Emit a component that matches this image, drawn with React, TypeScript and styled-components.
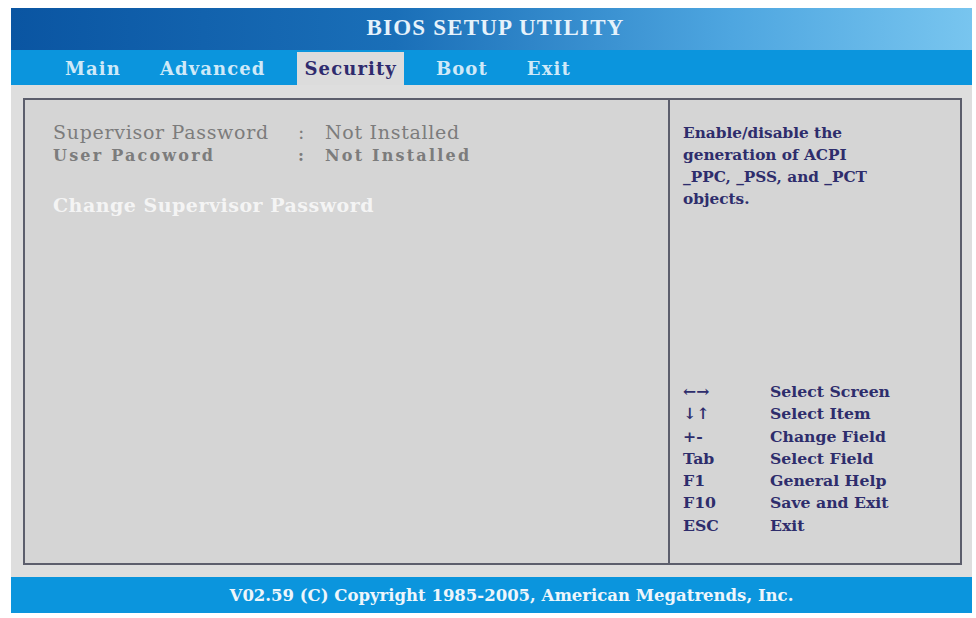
import React from 'react';
import styled, { createGlobalStyle } from 'styled-components';

const GlobalStyle = createGlobalStyle`
  html, body {
    margin: 0;
    padding: 0;
    background: #ffffff;
  }
  body {
    font-family: "DejaVu Serif", "Liberation Serif", serif;
  }
`;

const Page = styled.div`
  width: 976px;
  height: 618px;
  box-sizing: border-box;
  padding: 8px 4px 5px 11px;
  display: flex;
  flex-direction: column;
`;

const TitleBar = styled.div`
  height: 42px;
  display: flex;
  align-items: center;
  justify-content: center;
  background: linear-gradient(90deg, #0a55a2 0%, #1a6fb8 40%, #4ea6e0 75%, #78c5ef 100%);
  color: #e6f2fb;
  font-family: "Liberation Serif", serif;
  font-size: 23px;
  font-weight: bold;
  letter-spacing: 1.2px;
  padding: 0 0 2px 8px;
  box-sizing: border-box;
`;

const TabBar = styled.div`
  height: 35px;
  display: flex;
  align-items: flex-end;
  background: #0b95dd;
  padding-left: 47px;
`;

const Tab = styled.div<{ $active?: boolean }>`
  height: 33px;
  display: flex;
  align-items: center;
  padding: 0 7px;
  margin-right: 25px;
  font-size: 18px;
  font-weight: bold;
  letter-spacing: 1.1px;
  color: ${(p) => (p.$active ? '#2f2b6e' : '#cfe9f8')};
  background: ${(p) => (p.$active ? '#dcdcdc' : 'transparent')};
`;

const Body = styled.div`
  flex: 1;
  background: #dedede;
  padding: 13px 10px 12px 12px;
  display: flex;
`;

const Frame = styled.div`
  flex: 1;
  display: flex;
  border: 2px solid #5c5e6c;
  background: #d5d5d5;
`;

const LeftPanel = styled.div`
  width: 645px;
  border-right: 2px solid #5c5e6c;
  padding: 20px 0 0 28px;
  box-sizing: border-box;
`;

const InfoRow = styled.div<{ $small?: boolean }>`
  display: grid;
  grid-template-columns: 245px 27px auto;
  font-size: ${(p) => (p.$small ? '16px' : '19px')};
  font-weight: ${(p) => (p.$small ? 'bold' : 'normal')};
  letter-spacing: ${(p) => (p.$small ? '2.2px' : '0.7px')};
  color: #7c7c7c;
  line-height: ${(p) => (p.$small ? '24px' : '24px')};
`;

const ChangeItem = styled.div`
  margin-top: 26px;
  font-size: 19px;
  font-weight: bold;
  letter-spacing: 0.5px;
  color: #f4f4f4;
`;

const RightPanel = styled.div`
  flex: 1;
  display: flex;
  flex-direction: column;
  justify-content: space-between;
  padding: 22px 0 26px 13px;
  color: #2e2d6c;
  font-weight: bold;
`;

const HelpText = styled.div`
  font-size: 15.3px;
  line-height: 22px;
`;

const KeyList = styled.div`
  display: grid;
  grid-template-columns: 87px auto;
  font-size: 15.7px;
  line-height: 22.3px;
`;

const Footer = styled.div`
  height: 36px;
  display: flex;
  align-items: center;
  justify-content: center;
  background: #0b95dd;
  color: #eef6fb;
  font-size: 16.5px;
  font-weight: bold;
  padding-left: 40px;
`;

const keys: [string, string][] = [
  ['←→', 'Select Screen'],
  ['↓↑', 'Select Item'],
  ['+-', 'Change Field'],
  ['Tab', 'Select Field'],
  ['F1', 'General Help'],
  ['F10', 'Save and Exit'],
  ['ESC', 'Exit'],
];

const tabs = ['Main', 'Advanced', 'Security', 'Boot', 'Exit'];

export default function App() {
  return (
    <>
      <GlobalStyle />
      <Page>
        <TitleBar>BIOS SETUP UTILITY</TitleBar>
        <TabBar>
          {tabs.map((t) => (
            <Tab key={t} $active={t === 'Security'}>
              {t}
            </Tab>
          ))}
        </TabBar>
        <Body>
          <Frame>
            <LeftPanel>
              <InfoRow>
                <span>Supervisor Password</span>
                <span>:</span>
                <span>Not Installed</span>
              </InfoRow>
              <InfoRow $small>
                <span>User Pacoword</span>
                <span>:</span>
                <span>Not Installed</span>
              </InfoRow>
              <ChangeItem>Change Supervisor Password</ChangeItem>
            </LeftPanel>
            <RightPanel>
              <HelpText>
                Enable/disable the
                <br />
                generation of ACPI
                <br />
                _PPC, _PSS, and _PCT
                <br />
                objects.
              </HelpText>
              <KeyList>
                {keys.map(([k, d]) => (
                  <React.Fragment key={k}>
                    <span>{k}</span>
                    <span>{d}</span>
                  </React.Fragment>
                ))}
              </KeyList>
            </RightPanel>
          </Frame>
        </Body>
        <Footer>V02.59 (C) Copyright 1985-2005, American Megatrends, Inc.</Footer>
      </Page>
    </>
  );
}
